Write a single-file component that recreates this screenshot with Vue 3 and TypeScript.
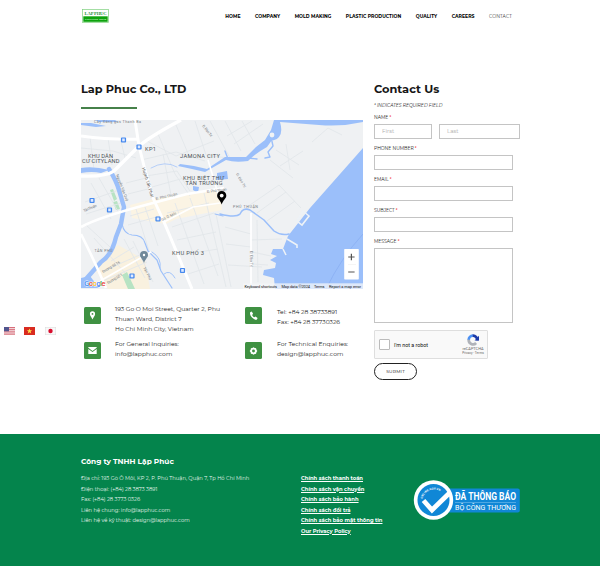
<script setup lang="ts">
interface NavItem { label: string; active?: boolean }
const nav: NavItem[] = [
  { label: 'HOME' },
  { label: 'COMPANY' },
  { label: 'MOLD MAKING' },
  { label: 'PLASTIC PRODUCTION' },
  { label: 'QUALITY' },
  { label: 'CAREERS' },
  { label: 'CONTACT', active: true },
]
const fields: string[] = ['PHONE NUMBER', 'EMAIL', 'SUBJECT']
const company: string[] = [
  'Địa chỉ: 193 Gò Ô Môi, KP 2, P. Phú Thuận, Quận 7, Tp Hồ Chí Minh',
  'Điện thoại: (+84) 28 3873 3891',
  'Fax: (+84) 28 3773 0326',
  'Liên hệ chung: info@lapphuc.com',
  'Liên hệ về kỹ thuật: design@lapphuc.com',
]
const policies: string[] = [
  'Chính sách thanh toán',
  'Chính sách vận chuyển',
  'Chính sách bảo hành',
  'Chính sách đổi trả',
  'Chính sách bảo mật thông tin',
  'Our Privacy Policy',
]
const minorRoads: string[] = [
  'M81 148L113 151L136 158', 'M90 137L94 170', 'M108 138L112 165', 'M120 137L125 158', 'M81 160L107 163',
  'M145 140L176 156L214 141', 'M158 134L175 174L190 196', 'M176 125L190 158', 'M195 121L206 155L228 158', 'M210 121L230 158',
  'M141 160L176 152L205 161', 'M146 176L177 171L190 191', 'M152 187L184 178', 'M163 154L171 195', 'M225 121L241 151',
  'M234 144L263 124', 'M227 136L252 121', 'M242 121L255 144', 'M91 183L111 219', 'M99 178L119 213', 'M85 202L119 190', 'M86 214L121 203',
  'M126 183L150 177', 'M128 194L152 188', 'M130 216L154 209', 'M128 225L160 216', 'M136 209L149 251', 'M145 207L158 246',
  'M167 213L209 203', 'M172 227L214 213', 'M177 240L216 232', 'M181 255L218 249', 'M188 274L219 264',
  'M175 203L204 284', 'M190 198L218 276', 'M204 193L226 287', 'M216 214L231 287', 'M225 227L251 234', 'M226 244L251 247', 'M228 265L262 267',
  'M257 220L258 282', 'M251 240L282 239', 'M252 252L271 256', 'M253 264L268 265', 'M247 207L279 185L301 208', 'M257 213L286 192', 'M267 221L295 201',
  'M94 238L125 273', 'M86 225L110 247', 'M124 239L145 278', 'M133 241L153 282', 'M111 261L134 247', 'M103 271L142 254', 'M98 283L147 262',
  'M276 150L299 165', 'M280 166L303 151', 'M286 144L290 170', 'M270 160L293 178', 'M312 142L328 128L342 135',
]
const stops: [number, number][] = [[123.5, 140], [139, 147], [92, 200.5], [109.5, 210], [158, 219], [182.5, 270.5], [132, 276]]
</script>

<template>
  <div class="page">
    <header class="header">
      <svg class="logo" viewBox="0 0 27 14">
        <rect x=".4" y=".4" width="26.2" height="13.2" fill="#fff" stroke="#7ed07e" stroke-width=".7" />
        <rect x="1.3" y="7.3" width="24.4" height="5.5" fill="#0da30d" />
        <text x="2.6" y="5.700" textLength="22" class="logo-a">LAP PHUC</text>
        <text x="3" y="11.100" textLength="21" class="logo-b">Precision Mold</text>
      </svg>
      <nav class="nav">
        <a v-for="n in nav" :key="n.label" :class="{ active: n.active }">{{ n.label }}</a>
      </nav>
    </header>

    <main class="main">
      <section class="left">
        <h1 class="h-left">Lap Phuc Co., LTD</h1>
        <div class="rule"></div>
        <svg class="map" viewBox="81 120 282 169">
          <rect x="81" y="120" width="282" height="169" fill="#eff1f3" />
          <path d="M130 205L153 199L187 194L220 190L222 210L176 219L166 224L132 218Z" fill="#fbf4e4" />
          <path d="M94 268L118 245L145 260L150 289H108Z" fill="#f9f1df" />
          <path d="M110 190l3-1 4 10-3 2ZM122 275l5-3 8 17h-7ZM113 202l4-1 3 8-4 1Z" fill="#b7e3c3" />
          <g fill="none" stroke="#e2e6ea" stroke-width=".9"><path v-for="d in minorRoads" :key="d" :d="d" /></g>
          <g fill="#9bbffa">
            <path d="M81 123L91 123L106 126L96 127L81 125ZM95 120h20l3 2H99Z" />
            <path d="M81 168Q94 166 109 170L101 173Q92 171 81 173Z" />
            <path d="M274 120H363V122Q341 127 319 125L280 122Q283 132 279 137Q276 141 272 140L267 147Q256 153 248 161Q235 163 226 160L205 172L192 169L178 166L180 164L194 166L207 169L225 157L246 157L256 147L265 140L271 130Z" />
            <path d="M363 148L310 208L288 236L283 249H273L271 254L277 256L270 260L276 263L275 268L264 270L263 275L274 278L275 289H363Z" />
            <path d="M217 173l10-2 1 8-11 1ZM193 186l6 1-1 6-5-3Z" />
            <path d="M81 278L90 276L99 288H81Z" />
          </g>
          <g fill="none" stroke="#9bbffa" stroke-linecap="round" stroke-linejoin="round">
            <path d="M109 169Q116 180 119 190L124 207L121 224L116 237Q112 255 101 262L86 279" stroke-width="4.4" />
            <path d="M122 224Q124 234 132 235Q143 235 145 243L148 251L157 260L161 271L172 288" stroke-width="1.2" />
            <path d="M152 252Q162 258 160 268M164 274Q170 269 175 278" stroke-width=".9" />
            <path d="M220 214Q236 218 240 214Q243 207 250 210L264 220L274 231Q281 236 289 234" stroke-width="1.5" />
            <path d="M271 137L273 146L268 152L270 157L265 158M248 158l9 1M225 151l3 8" stroke-width="1.4" />
            <path d="M151 168Q165 160 177 167" stroke-width=".7" /><path d="M215 214l8 2" stroke-width="1" />
          </g>
          <circle cx="272" cy="135" r="2.4" fill="#f1f3f5" />
          <path d="M303 211l6 5-7 9-5-4ZM287 239l10 6v3M283 249l3 6" fill="none" stroke="#edf2f7" stroke-width="1.6" />
          <g fill="none" stroke="#fff" stroke-linejoin="round">
            <path d="M81 176Q106 177 114 171L138 147Q149 137 181 120" stroke-width="3.4" />
            <path d="M81 136Q111 140 139 139M135 120L139 146L145 170L153 198L164 222L180 260L192 289" stroke-width="3" />
            <path d="M81 227Q99 217 153 203L187 194L224 188M81 234Q95 262 106 288" stroke-width="2.6" />
            <path d="M164 222L193 207L220 203M251 213V287M208 160L219 197M100 281L151 252" stroke-width="1.7" />
          </g>
          <path d="M363 234Q341 258 326 289" fill="none" stroke="#85aaf0" stroke-width=".6" />
          <g v-for="s in stops" :key="s.join('-')">
            <rect :x="s[0] - 2.6" :y="s[1] - 2.6" width="5.2" height="5.2" rx="1" fill="#4689ee" />
            <path :d="`M${s[0] - 1.3} ${s[1] - 1.5}h2.6v2.8h-2.6Z`" fill="#dfeaff" />
          </g>
          <g class="place">
            <text x="88" y="157.500" textLength="25">KHU DÂN</text>
            <text x="82" y="163" textLength="37.500">CƯ CITYLAND</text>
            <text x="145" y="151" textLength="11">KP1</text>
            <text x="180" y="158.400" textLength="40">JAMONA CITY</text>
            <text x="183" y="179.700" textLength="41">KHU BIỆT THỰ</text>
            <text x="185.500" y="185.400" textLength="37">TÂN TRƯỜNG</text>
            <text x="172" y="255.400" textLength="32">KHU PHỐ 3</text>
          </g>
          <g class="street">
            <text x="233" y="208.300" textLength="25">PHÚ THUẬN</text>
            <text x="94.500" y="252.400" textLength="18">TÂN PHÚ</text>
            <text transform="translate(142 168) rotate(73)" textLength="31" class="major">Huỳnh Tấn Phát</text>
            <text transform="translate(116 175) rotate(69)" textLength="28">Nguyễn Văn Quỳ</text>
            <text transform="translate(156 200) rotate(-13)" textLength="22">Đ. Phú Thuận</text>
            <text transform="translate(207 193) rotate(-7)" textLength="20">Đ. Phú Thuận</text>
            <text transform="translate(162 221) rotate(-25)" textLength="16">Gò Ô Môi</text>
            <text transform="translate(236 174) rotate(60)" textLength="16">Đ. Đào Trí</text>
            <text transform="translate(202 126) rotate(52)" textLength="14">Đ. Đào Trí</text>
            <text transform="translate(250 251) rotate(90)" textLength="16">Đ. Đào Trí</text>
            <text transform="translate(103 273) rotate(-30)" textLength="20">Đường Số 16</text>
            <text transform="translate(108 284) rotate(-30)" textLength="17">Đường Số 1</text>
            <text transform="translate(143 268) rotate(62)" textLength="14">Tân Phú</text>
            <text transform="translate(84 212) rotate(-23)" textLength="14">Tân Thuận</text>
            <text x="94" y="123" textLength="47">Cây Xăng gas Thanh Ba</text>
          </g>
          <path d="M144 263c-2-5-4-5.400-4-8a4 4 0 0 1 8 0c0 2.600-2 3-4 8Z" fill="#71899a" /><circle cx="144" cy="255" r="1.200" fill="#fff" />
          <path d="M221.700 204.500c-1.300-4.200-4.600-5.700-4.600-8.900a4.600 4.600 0 0 1 9.200 0c0 3.200-3.300 4.700-4.600 8.900Z" fill="#000" /><circle cx="221.700" cy="195.600" r="1.900" fill="#fff" />
          <rect x="344.200" y="249" width="14.600" height="30.500" rx=".7" fill="#fff" />
          <path d="M348.200 257h6.400M351.400 253.800v6.400M348.200 272h6.400" stroke="#555" stroke-width="1.200" />
          <path d="M348 264.500h8" stroke="#eaeaea" stroke-width=".5" />
          <rect x="243" y="283.300" width="120" height="5.700" fill="#f4f6f8" opacity=".75" />
          <g class="credit">
            <text x="244.500" y="287.600" textLength="32.500">Keyboard shortcuts</text>
            <text x="281.500" y="287.600" textLength="28.500">Map data ©2024</text>
            <text x="314" y="287.600" textLength="10.500">Terms</text>
            <text x="329" y="287.600" textLength="32">Report a map error</text>
          </g>
          <text x="84" y="286.300" textLength="21.500" class="google"><tspan fill="#4285f4">G</tspan><tspan fill="#ea4335">o</tspan><tspan fill="#fbbc05">o</tspan><tspan fill="#4285f4">g</tspan><tspan fill="#34a853">l</tspan><tspan fill="#ea4335">e</tspan></text>
        </svg>

        <div class="contacts">
          <span class="tile"><svg viewBox="0 0 17 17"><path d="M8.500 12.600C8 10.300 5.900 9 5.900 6.900a2.600 2.600 0 0 1 5.200 0c0 2.100-2.100 3.400-2.600 5.700Z" /><circle cx="8.500" cy="6.900" r=".9" fill="#3f9142" /></svg></span>
          <p>193 Go O Moi Street, Quarter 2, Phu<br>Thuan Ward, District 7<br>Ho Chi Minh City, Vietnam</p>
          <span class="tile"><svg viewBox="0 0 17 17"><path d="M5.200 5.200l1.500-.8 1.400 2.400-1 1.100c.6 1.200 1.200 1.800 2.300 2.400l1.100-.8 2.100 1.500-.7 1.500c-1.200.8-3.400-.3-4.900-1.900-1.500-1.700-2.500-4-1.800-5.400Z" /></svg></span>
          <p class="phones">Tel: +84 28 38733891<br>Fax: +84 28 37730326</p>
          <span class="tile"><svg viewBox="0 0 17 17"><path d="M4.300 4.900h8.400v.9L8.500 8.900 4.300 5.800ZM4.300 6.900l4.200 3.100 4.200-3.100v5H4.300Z" /></svg></span>
          <p>For General Inquiries:<br>info@lapphuc.com</p>
          <span class="tile"><svg viewBox="0 0 17 17"><circle cx="8.500" cy="9" r="2.300" fill="none" stroke="#fff" stroke-width="1.700" /><path d="M8.500 5.400v1.200M8.500 11.400v1.200M4.900 9h1.200M10.900 9h1.200M6 6.500l.8.800M10.200 10.700l.8.800M11 6.500l-.8.800M6 11.500l.8-.8" stroke="#fff" stroke-width="1.400" /></svg></span>
          <p>For Technical Enquiries:<br>design@lapphuc.com</p>
        </div>
      </section>

      <section class="right">
        <h2 class="h-right">Contact Us</h2>
        <p class="note">* INDICATES REQUIRED FIELD</p>
        <form class="form" @submit.prevent>
          <label>NAME <i>*</i></label>
          <div class="names"><input placeholder="First"><input placeholder="Last"></div>
          <template v-for="f in fields" :key="f">
            <label>{{ f }} <i>*</i></label>
            <input class="full">
          </template>
          <label>MESSAGE <i>*</i></label>
          <textarea class="full"></textarea>
          <div class="captcha">
            <span class="check"></span>
            <span class="robot">I'm not a robot</span>
            <div class="brand">
              <svg viewBox="0 0 12 12" fill="none" stroke-width="2.700"><path d="M1.700 6A4.300 4.300 0 0 1 5.900 1.700" stroke="#4a90f4" /><path d="M5.700 1.700A4.300 4.300 0 0 1 10.300 6.300" stroke="#1c3aa9" /><path d="M1.700 5.700A4.300 4.300 0 0 0 9.100 9" stroke="#b0b3b9" /><path d="M7.600 6.500H12V1.700Z" fill="#1c3aa9" stroke="none" /></svg>
              <span class="rc">reCAPTCHA</span>
              <span class="pt">Privacy - Terms</span>
            </div>
          </div>
          <button class="submit">SUBMIT</button>
        </form>
      </section>
    </main>

    <footer class="footer">
      <div class="about">
        <h3>Công ty TNHH Lập Phúc</h3>
        <p v-for="c in company" :key="c">{{ c }}</p>
      </div>
      <div class="policies"><a v-for="p in policies" :key="p">{{ p }}</a></div>
      <svg class="badge" viewBox="0 0 107 42">
        <rect x="22" y="8.500" width="83.800" height="24" rx="2" fill="#1087d6" />
        <circle cx="19.500" cy="20" r="19.700" fill="#fff" /><circle cx="19.500" cy="20" r="16" fill="#1087d6" />
        <path d="M9.500 20.500L18 30L36 12.500" fill="none" stroke="#fff" stroke-width="4.800" />
        <path id="arc" d="M8.600 18.800A11.500 11.500 0 0 1 29 14" fill="none" />
        <text class="arc-text"><textPath href="#arc" textLength="22">ONLINE.GOV.VN</textPath></text>
        <text x="41" y="20" textLength="61" lengthAdjust="spacingAndGlyphs" class="b1">ĐÃ THÔNG BÁO</text>
        <path d="M41 22.500H102" stroke="#8fc8f1" stroke-width=".5" />
        <text x="41" y="30.300" textLength="61" lengthAdjust="spacingAndGlyphs" class="b2">BỘ CÔNG THƯƠNG</text>
      </svg>
    </footer>

    <aside class="flags">
      <svg viewBox="0 0 11 8"><rect width="11" height="8" fill="#f3dfe2" /><path d="M0 .6h11M0 2.700h11M0 4.900h11M0 7.100h11" stroke="#d56370" stroke-width="1" /><rect width="5" height="4.300" fill="#52558d" /></svg>
      <svg viewBox="0 0 11 8"><rect width="11" height="8" fill="#d92b20" /><path d="M5.500 1.500l.7 1.800h1.900L6.600 4.500l.6 1.900-1.700-1.100-1.700 1.100.6-1.900-1.500-1.200h1.900Z" fill="#ffe34d" /></svg>
      <svg class="jp" viewBox="0 0 11 8"><rect x=".2" y=".2" width="10.600" height="7.600" fill="#f8f8f8" stroke="#d5d5d5" stroke-width=".4" /><circle cx="5.500" cy="4" r="2.200" fill="#d80d2d" /></svg>
    </aside>
  </div>
</template>

<style>
body { margin: 0; background: #fff; }
</style>
<style scoped>
* { box-sizing: border-box; }
.page { position: relative; width: 600px; height: 566px; overflow: hidden; font-family: Montserrat, Inter, "Noto Sans", sans-serif; color: #1c1c1c; background: #fff; display: flex; flex-direction: column; }
h1, h2, h3, p { margin: 0; }
.header { height: 82px; flex: none; display: flex; align-items: flex-start; justify-content: space-between; padding: 9px 88px 0 82px; }
.logo { width: 27px; height: 14px; }
.logo-a { font: 700 4.600px "Liberation Serif", serif; fill: #24913a; }
.logo-b { font: 700 2.900px "Liberation Serif", serif; fill: #d6f5d6; }
.nav { display: flex; gap: 14.500px; height: 14px; align-items: center; margin-top: .7px; }
.nav a { font-size: 4.600px; line-height: 8px; font-weight: 700; color: #000; white-space: nowrap; letter-spacing: .04px; }
.nav a.active { font-weight: 400; color: #333; letter-spacing: .1px; }
.main { height: 352px; flex: none; display: grid; grid-template-columns: 282px 146px; column-gap: 11px; padding-left: 81px; }
.h-left, .h-right { font-size: 11.300px; line-height: 15px; font-weight: 700; color: #161616; white-space: nowrap; }
.h-right { font-size: 11.400px; }
.rule { width: 56px; height: 1.500px; background: #46814a; margin-top: 10px; }
.map { display: block; width: 282px; height: 169px; margin-top: 11.500px; }
.place { font: 400 5.700px Roboto, sans-serif; fill: #4c5157; }
.street { font: 400 3.700px Roboto, sans-serif; fill: #777c82; }
.street .major { font-size: 4.200px; fill: #555; }
.credit { font: 400 3.900px Roboto, sans-serif; fill: #111; }
.google { font: 500 8px Roboto, sans-serif; stroke: #fff; stroke-width: .8px; paint-order: stroke; }
.contacts { display: grid; grid-template-columns: 31px 130px 32px 86px; grid-template-rows: 35px 22px; margin: 14.500px 0 0 3px; font-size: 6.020px; line-height: 10.400px; }
.contacts p { white-space: nowrap; }
.phones { padding-top: 3.500px; }
.tile { width: 17px; height: 17px; margin-top: 3.500px; border-radius: 1.500px; background: #3f9142; }
.tile svg { display: block; width: 17px; height: 17px; fill: #fff; }
.right { display: flex; flex-direction: column; }
.note { font-size: 4.500px; line-height: 8px; font-style: italic; margin-top: 4.500px; color: #222; white-space: nowrap; }
.form { display: flex; flex-direction: column; margin-top: 4.500px; align-items: flex-start; }
label { font-size: 4.500px; line-height: 8.500px; height: 9.500px; color: #111; }
label i { color: #e00; font-style: normal; }
input, textarea { display: block; border: 1px solid #c4c4c4; border-radius: 0; background: #fff; padding: 0 7px; margin: 0 0 6.500px; height: 15px; outline: 0; resize: none; font: 400 5.600px Montserrat, Inter, sans-serif; }
input::placeholder { color: #aaa; opacity: 1; }
.names { display: grid; grid-template-columns: 58px 81px; gap: 7px; }
.names input { width: 100%; min-width: 0; }
.full { width: 139px; }
textarea { height: 75.500px; margin-bottom: 7px; }
.captcha { width: 114px; height: 29px; border: 1px solid #dedede; background: #f9f9f9; border-radius: 1px; display: flex; align-items: center; padding-left: 4px; }
.check { width: 11px; height: 11px; border: 1px solid #bbb; border-radius: 1px; background: #fff; }
.robot { font: 400 5.300px Roboto, sans-serif; color: #111; margin-left: 4px; width: 66px; white-space: nowrap; }
.brand { width: 26px; display: flex; flex-direction: column; align-items: center; white-space: nowrap; color: #666; font-family: Roboto, sans-serif; }
.brand svg { width: 12px; height: 12px; }
.rc { font-size: 3.900px; line-height: 5px; }
.pt { font-size: 3.200px; line-height: 4px; }
.submit { width: 43px; height: 17px; border: 1.300px solid #222; border-radius: 9px; background: #fff; padding: 0; margin: 4px 0 0; font: 400 4.400px Montserrat, Inter, sans-serif; letter-spacing: .2px; color: #111; }
.footer { height: 132px; flex: none; background: #04844c; color: #fff; display: grid; grid-template-columns: 220px 113px 107px; padding: 22px 0 0 81px; }
.about h3 { font-size: 7.400px; line-height: 11px; font-weight: 700; margin-bottom: 6px; white-space: nowrap; }
.about p { font-size: 5.200px; line-height: 10.500px; white-space: nowrap; color: #e8f5ee; }
.policies { display: flex; flex-direction: column; padding-top: 17px; font-size: 5.230px; line-height: 10.500px; font-weight: 700; white-space: nowrap; }
.policies a { text-decoration: underline; }
.badge { width: 107px; height: 42px; margin-top: 24px; overflow: visible; }
.arc-text { font: 700 2.800px Roboto, sans-serif; fill: #fff; }
.b1 { font: 700 10px Roboto, sans-serif; fill: #fff; }
.b2 { font: 400 7px Roboto, sans-serif; fill: #fff; }
.flags { position: absolute; left: 4px; top: 327px; display: flex; gap: 8.500px; }
.flags svg { width: 11px; height: 8px; }
.flags .jp { margin-left: 2px; }
</style>
